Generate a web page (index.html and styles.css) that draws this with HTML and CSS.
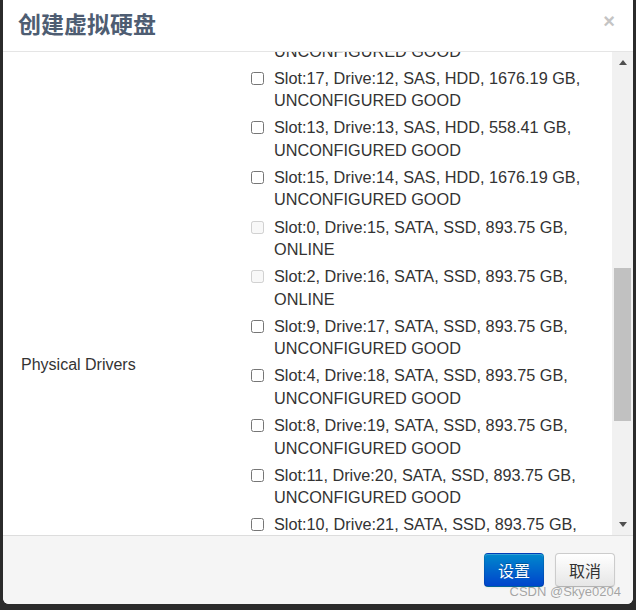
FILE: index.html
```html
<!DOCTYPE html>
<html lang="zh-CN">
<head>
<meta charset="utf-8">
<title>创建虚拟硬盘</title>
<link rel="stylesheet" href="styles.css">
</head>
<body>
<div class="modal">
  <div class="modal-header">
    <h3 class="modal-title">创建虚拟硬盘</h3>
    <button class="close" type="button">×</button>
  </div>
  <div class="body-wrap">
    <div class="modal-body" id="modalBody">
      <div class="form-grid">
        <div class="form-label">Virtual Drive Name</div>
        <div class="form-field"><input class="text-input" value="VD_1"></div>
        <div class="form-label">RAID Level</div>
        <div class="form-field"><select class="select-input"><option>RAID 5</option></select></div>
        <div class="form-label">Span Depth</div>
        <div class="form-field"><select class="select-input"><option>1</option></select></div>
        <div class="form-label">Strip Size</div>
        <div class="form-field"><select class="select-input"><option>256 KB</option></select></div>
        <div class="form-label">Read Policy</div>
        <div class="form-field"><select class="select-input"><option>Read Ahead</option></select></div>
        <div class="form-label">Write Policy</div>
        <div class="form-field"><select class="select-input"><option>Write Back</option></select></div>
        <div class="form-label">IO Policy</div>
        <div class="form-field"><select class="select-input"><option>Direct IO</option></select></div>
        <div class="form-label">Access Policy</div>
        <div class="form-field"><select class="select-input"><option>Read Write</option></select></div>
        <div class="form-label">Disk Cache Policy</div>
        <div class="form-field"><select class="select-input"><option>Unchanged</option></select></div>
        <div class="form-label">Init State</div>
        <div class="form-field"><select class="select-input"><option>No Init</option></select></div>

        <div class="form-label pd-label">Physical Drivers</div>
        <div class="drive-list">
          <label class="drive"><input type="checkbox"><span>Slot:14, Drive:9, SAS, HDD, 1676.19 GB, UNCONFIGURED GOOD</span></label>
          <label class="drive"><input type="checkbox"><span>Slot:16, Drive:10, SAS, HDD, 1676.19 GB, UNCONFIGURED GOOD</span></label>
          <label class="drive"><input type="checkbox"><span>Slot:12, Drive:11, SAS, HDD, 558.41 GB, UNCONFIGURED GOOD</span></label>
          <label class="drive" id="d12"><input type="checkbox"><span>Slot:17, Drive:12, SAS, HDD, 1676.19 GB, UNCONFIGURED GOOD</span></label>
          <label class="drive"><input type="checkbox"><span>Slot:13, Drive:13, SAS, HDD, 558.41 GB, UNCONFIGURED GOOD</span></label>
          <label class="drive"><input type="checkbox"><span>Slot:15, Drive:14, SAS, HDD, 1676.19 GB, UNCONFIGURED GOOD</span></label>
          <label class="drive"><input type="checkbox" disabled><span>Slot:0, Drive:15, SATA, SSD, 893.75 GB, ONLINE</span></label>
          <label class="drive"><input type="checkbox" disabled><span>Slot:2, Drive:16, SATA, SSD, 893.75 GB, ONLINE</span></label>
          <label class="drive"><input type="checkbox"><span>Slot:9, Drive:17, SATA, SSD, 893.75 GB, UNCONFIGURED GOOD</span></label>
          <label class="drive"><input type="checkbox"><span>Slot:4, Drive:18, SATA, SSD, 893.75 GB, UNCONFIGURED GOOD</span></label>
          <label class="drive"><input type="checkbox"><span>Slot:8, Drive:19, SATA, SSD, 893.75 GB, UNCONFIGURED GOOD</span></label>
          <label class="drive"><input type="checkbox"><span>Slot:11, Drive:20, SATA, SSD, 893.75 GB, UNCONFIGURED GOOD</span></label>
          <label class="drive"><input type="checkbox"><span>Slot:10, Drive:21, SATA, SSD, 893.75 GB, UNCONFIGURED GOOD</span></label>
          <label class="drive"><input type="checkbox"><span>Slot:5, Drive:22, SATA, SSD, 893.75 GB, UNCONFIGURED GOOD</span></label>
          <label class="drive"><input type="checkbox"><span>Slot:6, Drive:23, SATA, SSD, 893.75 GB, UNCONFIGURED GOOD</span></label>
          <label class="drive"><input type="checkbox"><span>Slot:7, Drive:24, SATA, SSD, 893.75 GB, UNCONFIGURED GOOD</span></label>
          <label class="drive"><input type="checkbox"><span>Slot:1, Drive:25, SATA, SSD, 893.75 GB, UNCONFIGURED GOOD</span></label>
          <label class="drive"><input type="checkbox"><span>Slot:3, Drive:26, SATA, SSD, 893.75 GB, UNCONFIGURED GOOD</span></label>
        </div>
      </div>
    </div>
    <div class="scrollbar" aria-hidden="true">
      <span class="sb-btn sb-up"></span>
      <div class="sb-track"><div class="sb-thumb"></div></div>
      <span class="sb-btn sb-down"></span>
    </div>
  </div>
  <div class="modal-footer">
    <button class="btn btn-primary" type="button">设置</button>
    <button class="btn" type="button">取消</button>
    <span class="watermark">CSDN @Skye0204</span>
  </div>
</div>
<script src="script.js"></script>
</body>
</html>
```

FILE: styles.css
```css
html, body {
  margin: 0;
  height: 100%;
  background: #2b2b2b;
}
body {
  padding: 0 3px;
  overflow: hidden;
  font-family: "Liberation Sans", Arial, "Noto Sans CJK SC", sans-serif;
}
.modal {
  position: relative;
  height: 604px;
  background: #fff;
  border-radius: 0 0 6px 6px;
  display: flex;
  flex-direction: column;
  overflow: hidden;
}
.modal-header {
  flex: 0 0 52px;
  box-sizing: border-box;
  border-bottom: 1px solid #e5e5e5;
  display: flex;
  justify-content: space-between;
  align-items: center;
  padding: 0 18px 5px 15px;
}
.modal-title {
  margin: 0;
  font-family: "Noto Sans CJK SC", sans-serif;
  font-weight: bold;
  font-size: 23px;
  line-height: 30px;
  color: #4e5d72;
}
.close {
  align-self: flex-start;
  margin-top: 11px;
  padding: 0;
  border: 0;
  background: none;
  font: bold 20px/20px "Liberation Sans", Arial, sans-serif;
  color: #c4c4c4;
}
.body-wrap {
  flex: 0 0 483px;
  display: flex;
  min-height: 0;
}
.modal-body {
  flex: 1;
  overflow: hidden;
  color: #333;
  font-size: 16px;
  line-height: 22.4px;
}
.scrollbar {
  flex: 0 0 21px;
  display: flex;
  flex-direction: column;
  background: #f1f1f1;
}
.sb-btn {
  flex: 0 0 21px;
  display: flex;
  align-items: center;
  justify-content: center;
}
.sb-btn::before {
  content: "";
  width: 0;
  height: 0;
  border-left: 4.5px solid transparent;
  border-right: 4.5px solid transparent;
}
.sb-up::before {
  border-bottom: 5px solid #505050;
}
.sb-down::before {
  border-top: 5px solid #505050;
}
.sb-track {
  flex: 1;
  padding: 0 2px;
}
.sb-thumb {
  margin-top: 195px;
  height: 153px;
  background: #c1c1c1;
}
.form-grid {
  display: grid;
  grid-template-columns: 229px 1fr;
  padding: 15px 6px 15px 18px;
}
.form-label {
  padding: 8px 0;
  align-self: center;
}
.form-field {
  padding: 8px 0;
}
.text-input, .select-input {
  width: 220px;
  height: 30px;
  border: 1px solid #ccc;
  border-radius: 4px;
  font: 14px "Liberation Sans", Arial, sans-serif;
  box-sizing: border-box;
  padding: 0 6px;
}
.pd-label {
  align-self: center;
}
.drive-list {
  display: flex;
  flex-direction: column;
  gap: 4.8px;
  padding: 8px 0 14px;
  font-size: 16.25px;
}
.drive {
  display: flex;
  align-items: flex-start;
  gap: 10px;
}
.drive input {
  flex: none;
  width: 13px;
  height: 13px;
  margin: 5px 0 0 1px;
}
.modal-footer {
  flex: 1;
  background: #f5f5f5;
  border-top: 1px solid #ddd;
  display: flex;
  justify-content: flex-end;
  align-items: flex-start;
  gap: 11px;
  padding: 17px 18px 0;
}
.btn {
  height: 34px;
  padding: 0 13px;
  font: 16px/22px "Noto Sans CJK SC", sans-serif;
  color: #333;
  border: 1px solid #ccc;
  border-bottom-color: #b3b3b3;
  border-radius: 4px;
  background: linear-gradient(#ffffff, #e6e6e6);
  box-shadow: inset 0 1px 0 rgba(255,255,255,.2), 0 1px 2px rgba(0,0,0,.05);
}
.btn-primary {
  color: #fff;
  background: linear-gradient(#0088cc, #0044cc);
  border-color: rgba(0,0,0,.1) rgba(0,0,0,.1) rgba(0,0,0,.25);
  text-shadow: 0 -1px 0 rgba(0,0,0,.25);
}
.watermark {
  position: absolute;
  right: 12px;
  bottom: 5px;
  font: 13px/15px "Liberation Sans", Arial, sans-serif;
  color: rgba(110,110,110,.6);
}
```

FILE: script.js
```js
var b = document.getElementById('modalBody');
var t = document.getElementById('d12');
b.scrollTop = t.getBoundingClientRect().top - b.getBoundingClientRect().top - 15;
```
